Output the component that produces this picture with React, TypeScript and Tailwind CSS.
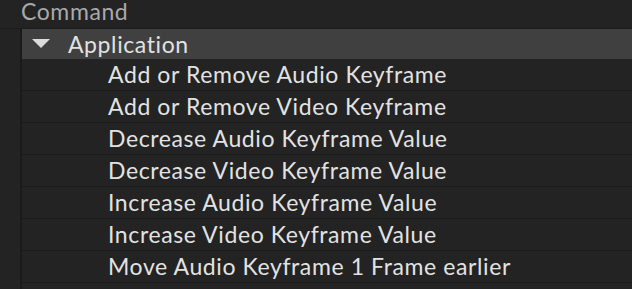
const items = [
  'Add or Remove Audio Keyframe',
  'Add or Remove Video Keyframe',
  'Decrease Audio Keyframe Value',
  'Decrease Video Keyframe Value',
  'Increase Audio Keyframe Value',
  'Increase Video Keyframe Value',
  'Move Audio Keyframe 1 Frame earlier',
];

export default function App() {
  return (
    <div className="h-[289px] w-[632px] overflow-hidden bg-[#232323] font-['Lato',sans-serif] tracking-[0.6px] antialiased">
      <div className="h-[29px] border-b border-[#1b1b1b] pl-[21px] text-[23px] leading-[23px] text-[#a9a9a9]">
        Command
      </div>
      <div className="ml-[20px] border-l-2 border-[#1b1b1b]">
        <div className="flex h-[30px] items-center bg-[#404040] text-[23px] leading-none text-[#e2e2e2]">
          <svg width="18" height="10" viewBox="0 0 18 10" className="ml-[10px] mr-[18px]">
            <polygon points="0,0 18,0 9,9" fill="#dcdcdc" />
          </svg>
          Application
        </div>
        {items.map((t) => (
          <div
            key={t}
            className="flex h-[32px] items-center border-b border-[#1b1b1b] pl-[86px] text-[23px] leading-none text-[#e2e2e2]"
          >
            {t}
          </div>
        ))}
        <div className="h-[32px]" />
      </div>
    </div>
  );
}
